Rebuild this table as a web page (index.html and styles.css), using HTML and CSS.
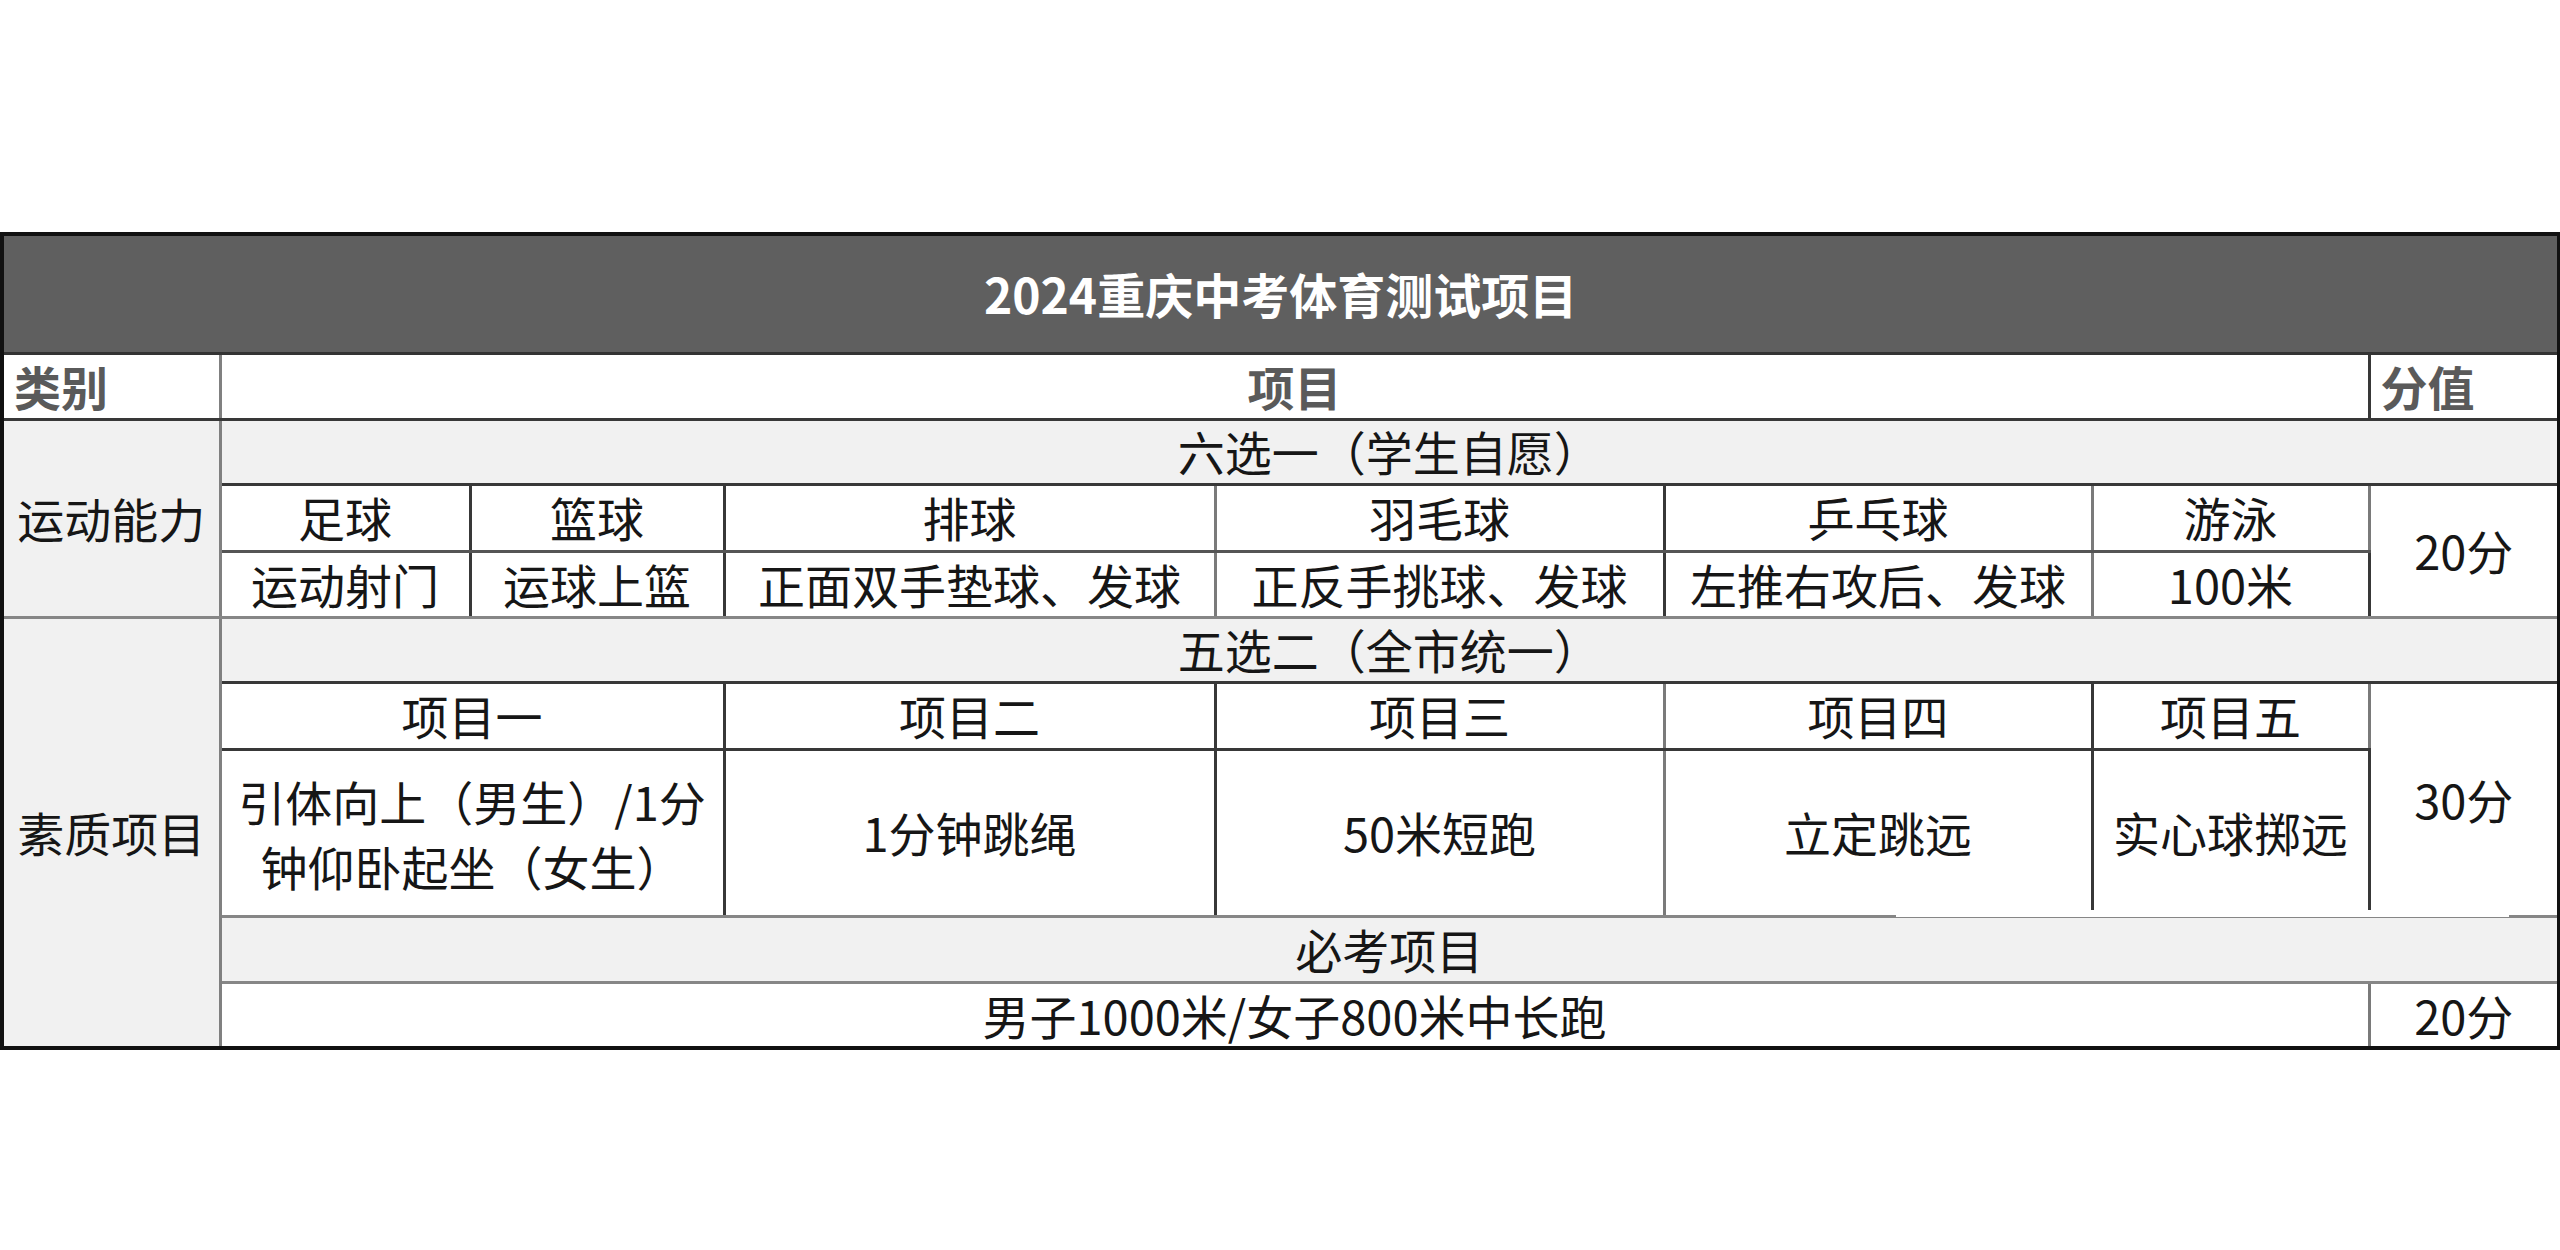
FILE: index.html
```html
<!DOCTYPE html>
<html lang="zh-CN">
<head>
<meta charset="utf-8">
<title>2024重庆中考体育测试项目</title>
<link rel="stylesheet" href="styles.css">
</head>
<body>
<div class="sheet">
  <table class="grid">
    <colgroup>
      <col class="c1"><col class="c2"><col class="c3"><col class="c4"><col class="c5"><col class="c6"><col class="c7"><col class="c8">
    </colgroup>
    <tr class="r-title">
      <td colspan="8" class="title">2024重庆中考体育测试项目</td>
    </tr>
    <tr class="r66">
      <td class="head left cat">类别</td>
      <td colspan="6" class="head">项目</td>
      <td class="head left">分值</td>
    </tr>
    <tr class="r65">
      <td rowspan="3" class="cat shade gbot">运动能力</td>
      <td colspan="7" class="shade">六选一（学生自愿）</td>
    </tr>
    <tr class="r67">
      <td class="mbot">足球</td>
      <td class="mbot">篮球</td>
      <td class="mbot gr">排球</td>
      <td class="mbot">羽毛球</td>
      <td class="mbot gr">乒乓球</td>
      <td class="mbot gr">游泳</td>
      <td rowspan="2" class="gbot">20分</td>
    </tr>
    <tr class="r66">
      <td class="gbot">运动射门</td>
      <td class="gbot">运球上篮</td>
      <td class="gbot gr">正面双手垫球、发球</td>
      <td class="gbot">正反手挑球、发球</td>
      <td class="gbot gr">左推右攻后、发球</td>
      <td class="gbot gr">100米</td>
    </tr>
    <tr class="r65">
      <td rowspan="5" class="cat shade">素质项目</td>
      <td colspan="7" class="shade">五选二（全市统一）</td>
    </tr>
    <tr class="r67">
      <td colspan="2">项目一</td>
      <td>项目二</td>
      <td class="gr">项目三</td>
      <td>项目四</td>
      <td class="gr">项目五</td>
      <td rowspan="2" class="gbot">30分</td>
    </tr>
    <tr class="r-big">
      <td colspan="2" class="gbot two">引体向上（男生）/1分<br>钟仰卧起坐（女生）</td>
      <td class="gbot">1分钟跳绳</td>
      <td class="gbot gr">50米短跑</td>
      <td class="gbot">立定跳远</td>
      <td class="gbot gr">实心球掷远</td>
    </tr>
    <tr class="r66">
      <td colspan="7" class="shade gbot">必考项目</td>
    </tr>
    <tr class="r66">
      <td colspan="6" class="gr">男子1000米/女子800米中长跑</td>
      <td>20分</td>
    </tr>
  </table>
  <div class="erase"></div>
</div>
</body>
</html>
```

FILE: styles.css
```css
html, body {
  margin: 0;
  padding: 0;
  background: #ffffff;
}

body {
  font-family: "Noto Sans CJK SC", "Noto Sans", sans-serif;
}

.sheet {
  position: relative;
  padding-top: 232px;
  width: 2560px;
}

.grid {
  border-collapse: collapse;
  table-layout: fixed;
  width: 2557px;
  font-size: 47px;
  color: #161616;
  border: 4px solid #111111;
}

.c1 { width: 218px; }
.c2 { width: 250px; }
.c3 { width: 254px; }
.c4 { width: 491px; }
.c5 { width: 449px; }
.c6 { width: 428px; }
.c7 { width: 277px; }
.c8 { width: 190px; }

.grid td {
  border: 3px solid #383838;
  padding: 0;
  text-align: center;
  vertical-align: middle;
  line-height: 1.2;
  white-space: nowrap;
  background: #ffffff;
}

.r-title { height: 119px; }
.r65 { height: 65px; }
.r66 { height: 66px; }
.r67 { height: 67px; }
.r-big { height: 167px; }

.grid td.title {
  background: #5f5f5f;
  color: #ffffff;
  font-weight: 700;
  font-size: 48px;
  border-color: #111111;
  border-bottom-color: #333333;
}

.grid td.head {
  font-weight: 700;
  color: #5a5a5a;
}

.grid td.left {
  text-align: left;
  padding-left: 10px;
}

.grid td.shade {
  background: #f1f1f1;
}

.grid td.cat {
  border-right: 3px solid #808080;
}

.grid td.gbot {
  border-bottom: 3px solid #868686;
}

.grid td.mbot {
  border-bottom: 3px solid #555555;
}

.grid td.gr {
  border-right: 3px solid #7a7a7a;
}

.grid td.two {
  line-height: 65px;
}

.erase {
  position: absolute;
  left: 1896px;
  top: 910px;
  width: 613px;
  height: 7px;
  background: #ffffff;
}
```
